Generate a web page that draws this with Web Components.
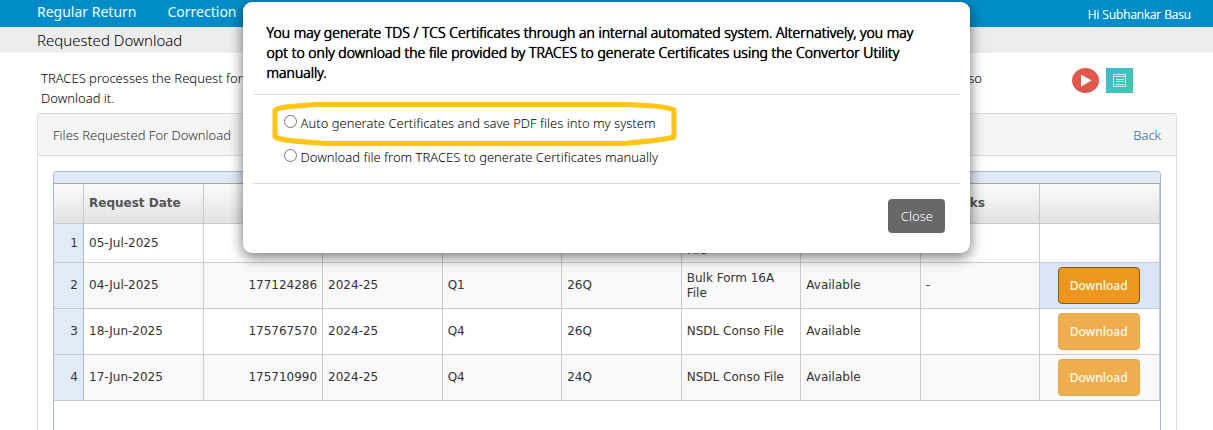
<!DOCTYPE html>
<html lang="en">
<head>
<meta charset="utf-8">
<title>Requested Download</title>
<style>
body{margin:0;background:#fff;color:#111;font:300 13px/20px "Noto Sans","Open Sans",sans-serif}
</style>
</head>
<body>
<requested-page></requested-page>
<script>
const define = (name, html, setup) => customElements.define(name, class extends HTMLElement {
  connectedCallback() {
    if (this.shadowRoot) return;
    this.attachShadow({ mode: 'open' });
    const t = document.createElement('template');
    t.innerHTML = html;
    this.shadowRoot.append(t.content.cloneNode(true));
    if (setup) setup(this.shadowRoot, this);
  }
});

define('top-nav', `
<style>
:host{display:flex;justify-content:space-between;height:27px;background:#008dc7;padding:0 22px 0 37px}
nav{display:flex;gap:31px}
a{color:#f0fbff;text-decoration:none;font-size:14px;font-weight:400;line-height:24px}
.user{color:#fff;font-size:12px;line-height:30px;text-shadow:0 0 0 #fff}
</style>
<nav><a href="#regular">Regular Return</a><a href="#correction">Correction</a></nav>
<span class="user"><slot></slot></span>`);

define('page-title', `
<style>
:host{display:block;background:#ededee;height:26px;padding-left:37px}
h1{margin:0;font-size:15px;font-weight:300;line-height:26px;color:#000}
</style>
<h1><slot></slot></h1>`);

define('page-intro', `
<style>
:host{display:flex;align-items:flex-start;justify-content:space-between;margin:15px 80px 0 41px;color:#000}
p{margin:0;flex:0 0 941px}
.line{display:flex;justify-content:space-between}
.links{display:flex;gap:7px}
a{display:block;line-height:0}
svg{display:block}
</style>
<p><span class="line"><span>TRACES processes the Request for</span><span>so</span></span>Download it.</p>
<div class="links">
<a href="#video" aria-label="Watch video"><svg width="27" height="25" viewBox="0 0 27 25"><ellipse cx="13.5" cy="12.5" rx="13.5" ry="12.5" fill="#e2574c"/><path d="M9 6.500L19.500 12.500 9 18.500z" fill="#fff"/></svg></a>
<a href="#guide" aria-label="Open guide"><svg width="27" height="25" viewBox="0 0 27 25"><defs><linearGradient id="g" x1="0" y1="0" x2="1" y2="1"><stop offset="0" stop-color="#3cb9d8"/><stop offset="1" stop-color="#45c9a2"/></linearGradient></defs><path d="M0 0h27v25H0z" fill="url(#g)"/><g fill="none" stroke="#c4f0ea"><path d="M7.500 6.500h12v12h-12z"/><path d="M7 8.500h13M10 11.500h8M10 13.500h8M10 16.500h8"/></g></svg></a>
</div>`);

define('files-panel', `
<style>
:host{display:flex;flex-direction:column;margin:5px 36px 0 37px;border:1px solid #ddd;border-bottom:0;border-radius:4px 4px 0 0;background:#fff}
header{display:flex;justify-content:space-between;align-items:center;height:41px;padding:0 15px;background:#f5f5f5;border-bottom:1px solid #ddd;border-radius:3px 3px 0 0;color:#333}
h2{margin:0;font-size:13px;font-weight:300}
a{color:#2a6496;text-decoration:none}
.body{display:flex;flex-direction:column;flex:1;padding:15px 15px 0}
::slotted(*){flex:1}
</style>
<header><h2>Files Requested For Download</h2><a href="#back">Back</a></header>
<div class="body"><slot></slot></div>`);

const rows = [
  ['05-Jul-2025', '', '', '', '', 'Bulk Form 16A File', '', '', ''],
  ['04-Jul-2025', '177124286', '2024-25', 'Q1', '26Q', 'Bulk Form 16A File', 'Available', '-', 'active'],
  ['18-Jun-2025', '175767570', '2024-25', 'Q4', '26Q', 'NSDL Conso File', 'Available', '', 'get'],
  ['17-Jun-2025', '175710990', '2024-25', 'Q4', '24Q', 'NSDL Conso File', 'Available', '', 'get']
];

define('download-button', `
<style>
:host{display:inline-block;vertical-align:middle}
button{display:block;width:82px;height:37px;padding:0;border:1px solid #e5a650;border-radius:4px;background:#f0ad4e;color:#fffbe8;font:500 12px/20px "Noto Sans",sans-serif}
:host([active]) button{background:#ec971f;border-color:#8a5a14}
</style>
<button type="button">Download</button>`);

define('request-grid', `
<style>
:host{display:block;border:1px solid #a6bbd2;border-bottom:0;border-radius:4px 4px 0 0;font:12px/15px "DejaVu Sans",Verdana,sans-serif;color:#333}
.caption{height:11px;background:#e1eaf7;border-bottom:1px solid #a9a9a9;border-radius:3px 3px 0 0}
table{width:100%;table-layout:fixed;border-collapse:separate;border-spacing:0}
.no{width:30px}
th,td{box-sizing:border-box;padding:0 5px;text-align:left;border-right:1px solid #c9cbce;border-bottom:1px solid #c9cbce;overflow:hidden}
th{height:40px;color:#555;background:linear-gradient(#fcfcfc,#e2e2e2)}
td{height:46px}
tbody tr:first-child td{height:39px}
tbody tr:nth-child(even){background:#f9f9f9}
tbody td:first-child{text-align:right;background:#e1eaf7;border-right-color:#a6bbd2}
td:nth-child(3){text-align:right}
td:last-child{text-align:center;padding:0 7px 0 5px}
td.active{background:#d9e6f8}
</style>
<div class="caption"></div>
<table><colgroup><col class="no"><col span="9"></colgroup>
<thead><tr><th></th><th>Request Date</th><th></th><th></th><th></th><th></th><th></th><th></th><th>Remarks</th><th></th></tr></thead>
<tbody></tbody></table>`, root => {
  const body = root.querySelector('tbody');
  rows.forEach((row, i) => {
    const tr = body.insertRow();
    tr.insertCell().textContent = i + 1;
    row.forEach((value, c) => {
      const td = tr.insertCell();
      if (c < 8) td.textContent = value;
      else if (value) {
        const b = document.createElement('download-button');
        if (value === 'active') { b.setAttribute('active', ''); td.className = 'active'; }
        td.append(b);
      }
    });
  });
});

define('radio-option', `
<style>
:host{display:block;position:relative}
label{display:inline-flex;align-items:flex-start;gap:4px;color:#000}
input{appearance:none;box-sizing:border-box;width:13px;height:13px;margin:2px 0 0;border:1px solid #767676;border-radius:50%;background:#fff}
input:checked{background:#767676}
svg{position:absolute;left:-12px;top:-12px;pointer-events:none}
:host(:not([marked])) svg{display:none}
</style>
<label><input type="radio" name="mode"><slot></slot></label>
<svg width="406" height="46" viewBox="0 0 406 46" fill="none" stroke="#fec514" stroke-width="5" stroke-linejoin="round"><path d="M3 9C7 6 20 5 46 3.500H350C375 4 394 5 402 9V36C392 39 380 40 352 42.500H56C32 41 11 40 3 36Z"/></svg>`);

define('choice-dialog', `
<style>
:host{position:absolute;top:2px;left:20%;width:60%;box-sizing:border-box;background:#fff;border-radius:9px;padding:0 10px;box-shadow:0 4px 14px rgba(0,0,0,.55)}
h2{margin:0;padding:21px 38px 11px 14px;font-size:14px;line-height:20px;font-weight:300;color:#000;text-shadow:0 0 0 #000,0 0 1px #000}
.options{display:flex;flex-direction:column;gap:14px;border:solid #ddd;border-width:1px 0;padding:18px 31px 16px}
footer{display:flex;justify-content:flex-end;padding:15px 15px 20px}
button{width:57px;height:34px;padding:0;border:0;border-radius:4px;background:#686868;color:#fff;font:300 13px/20px "Noto Sans",sans-serif}
</style>
<h2>You may generate TDS / TCS Certificates through an internal automated system. Alternatively, you may opt to only download the file provided by TRACES to generate Certificates using the Convertor Utility manually.</h2>
<div class="options">
<radio-option marked>Auto generate Certificates and save PDF files into my system</radio-option>
<radio-option>Download file from TRACES to generate Certificates manually</radio-option>
</div>
<footer><button type="button">Close</button></footer>`);

define('requested-page', `
<style>
:host{display:flex;flex-direction:column;position:relative;min-height:100vh}
files-panel{flex:1}
</style>
<top-nav>Hi Subhankar Basu</top-nav>
<page-title>Requested Download</page-title>
<page-intro></page-intro>
<files-panel><request-grid></request-grid></files-panel>
<choice-dialog role="dialog"></choice-dialog>`);
</script>
</body>
</html>
